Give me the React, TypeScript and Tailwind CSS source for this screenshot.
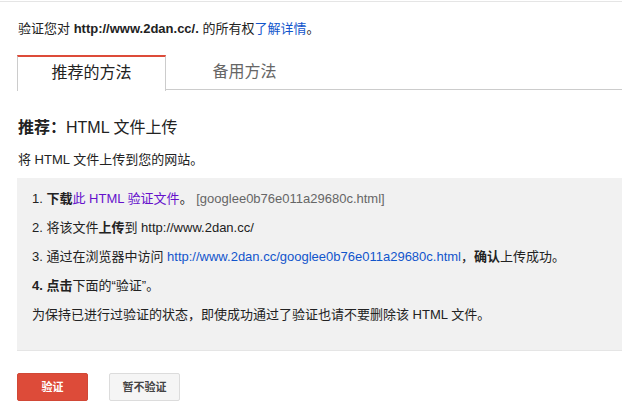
import React from "react";

const font = "font-['Arial','Liberation_Sans','Noto_Sans_CJK_SC',sans-serif]";

export default function App() {
  return (
    <div className={`w-[622px] h-[417px] bg-white overflow-hidden pt-px text-[13px] text-[#222] ${font}`}>
      <div className="border-t border-[#e5e5e5]">
        <div className="pl-[18px] pt-[16px] leading-[21px]">
          验证您对 <b>http://www.2dan.cc/.</b> 的所有权
          <span className="text-[#15c]">了解详情</span>。
        </div>

        <div className="mt-[16px] ml-[17px] flex border-b border-[#ccc] h-[35px]">
          <div className="w-[149px] h-[36px] bg-white border-t-2 border-t-[#dd4b39] border-x border-x-[#ccc] text-center text-[16px] leading-[32px] text-[#222]">
            推荐的方法
          </div>
          <div className="w-[157px] text-center text-[16px] leading-[34px] text-[#666]">
            备用方法
          </div>
        </div>

        <div className="pl-[18px] mt-[28px] text-[16px] leading-[20px] text-[#222]">
          <b>推荐：</b>HTML 文件上传
        </div>
        <div className="pl-[18px] mt-[12px] leading-[20px]">将 HTML 文件上传到您的网站。</div>

        <div className="ml-[17px] mt-[8px] bg-[#f1f1f1] border-b border-[#e5e5e5] pl-[15px] pt-[11px] h-[173px] flex flex-col gap-[9px] leading-[20px]">
          <div>
            1. <b>下载</b>
            <span className="text-[#61c]">此 HTML 验证文件</span>。&nbsp;
            <span className="text-[#666]">[googlee0b76e011a29680c.html]</span>
          </div>
          <div>
            2. 将该文件<b>上传</b>到 http://www.2dan.cc/
          </div>
          <div>
            3. 通过在浏览器中访问 <span className="text-[#15c]">http://www.2dan.cc/googlee0b76e011a29680c.html</span>，<b>确认</b>上传成功。
          </div>
          <div>
            <b>4. 点击</b>下面的“验证”。
          </div>
          <div>为保持已进行过验证的状态，即使成功通过了验证也请不要删除该 HTML 文件。</div>
        </div>

        <div className="ml-[17px] mt-[22px] flex gap-[21px]">
          <button className="w-[71px] h-[28px] rounded-[2px] bg-[#dd4b39] border border-[#d14836] text-white text-[11px] font-bold">
            验证
          </button>
          <button className="w-[71px] h-[28px] rounded-[2px] bg-[#f5f5f5] border border-[#dcdcdc] text-[#444] text-[11px] font-bold">
            暂不验证
          </button>
        </div>
      </div>
    </div>
  );
}
